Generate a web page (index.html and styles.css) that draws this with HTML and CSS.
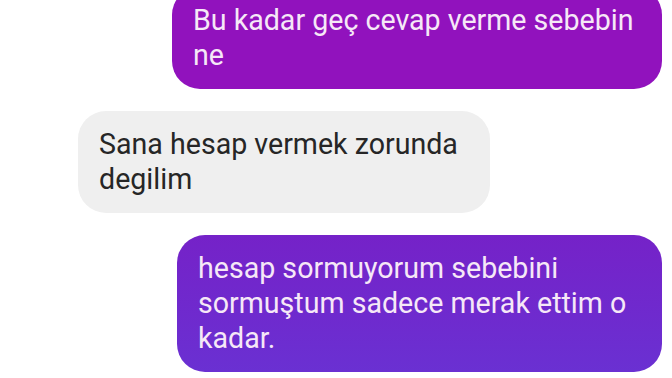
FILE: index.html
```html
<!DOCTYPE html>
<html lang="tr">
<head>
    <meta charset="UTF-8">
    <meta name="viewport" content="width=device-width, initial-scale=1.0">
    <title>Mesajlar</title>
    <link rel="stylesheet" href="styles.css">
</head>
<body>
    <!-- sohbet -->
    <div class="chat">
        <div class="msg sent first">
            <p>Bu kadar geç cevap verme sebebin ne</p>
        </div>
        <div class="msg received">
            <p>Sana hesap vermek zorunda degilim</p>
        </div>
        <div class="msg sent second">
            <p>hesap sormuyorum sebebini sormuştum sadece merak ettim o kadar.</p>
        </div>
    </div>
</body>
</html>
```

FILE: styles.css
```css
    body {
        margin: 0;
        background-color: #ffffff;
        font-family: Roboto, "Noto Sans", sans-serif;
        overflow: hidden;
    }

    /* sohbet listesi */
    .chat {
        display: flex;
        flex-direction: column;
        gap: 22px;
        margin-top: -13px;
        padding: 0 10px 0 78px;
    }

    .msg {
        padding: 16px 21px;
        border-radius: 28px;
        box-sizing: border-box;
    }

    .msg p {
        margin: 0;
        font-size: 28.6px;
        line-height: 35px;
    }

    /* gönderilen */
    .sent {
        align-self: flex-end;
        color: #f6e8f7;
    }

    .sent.first {
        width: 490px;
        background-color: #9112bd;
    }

    .sent.second {
        width: 485px;
        background: linear-gradient(#7522c8, #6a30d2);
    }

    /* gelen */
    .received {
        align-self: flex-start;
        width: 412px;
        background-color: #efefef;
        color: #262626;
    }
```
